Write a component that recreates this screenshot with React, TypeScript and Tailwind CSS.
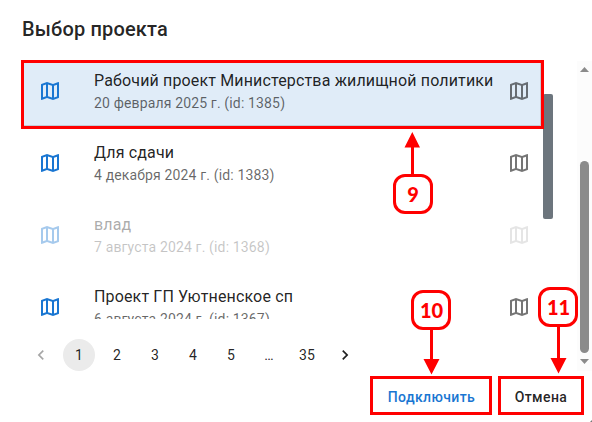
import React from "react";

const MAP_PATH =
  "M20.5 3l-.16.03L15 5.1 9 3 3.36 4.9c-.21.07-.36.25-.36.48V20.5c0 .28.22.5.5.5l.16-.03L9 18.9l6 2.1 5.64-1.9c.21-.07.36-.25.36-.48V3.5c0-.28-.22-.5-.5-.5zM10 5.47l4 1.4v11.66l-4-1.4V5.47zm-5 .99l3-1.01v11.7l-3 1.16V6.46zm14 11.08l-3 1.01V6.86l3-1.16v11.84z";

function MapIcon({ className }: { className: string }) {
  return (
    <svg viewBox="0 0 24 24" className={`size-6 shrink-0 fill-current ${className}`} aria-hidden="true">
      <path d={MAP_PATH} />
    </svg>
  );
}

interface Project {
  name: string;
  info: string;
  selected?: boolean;
  disabled?: boolean;
}

const projects: Project[] = [
  { name: "Рабочий проект Министерства жилищной политики", info: "20 февраля 2025 г. (id: 1385)", selected: true },
  { name: "Для сдачи", info: "4 декабря 2024 г. (id: 1383)" },
  { name: "влад", info: "7 августа 2024 г. (id: 1368)", disabled: true },
  { name: "Проект ГП Уютненское сп", info: "6 августа 2024 г. (id: 1367)" },
];

function ProjectRow({ project }: { project: Project }) {
  const fade = project.disabled ? "opacity-[0.38]" : "";
  return (
    <li className={`flex h-[72px] shrink-0 items-center pl-4 pr-3 ${project.selected ? "bg-[#e0ecf8]" : ""}`}>
      <div className={`w-14 shrink-0 ${fade}`}>
        <MapIcon className="text-[#1976d2]" />
      </div>
      <div className={`min-w-0 grow whitespace-nowrap tracking-[0.15px] ${fade}`}>
        <div className="text-base leading-6 text-black/87">{project.name}</div>
        <div className="text-sm leading-5 text-black/60">{project.info}</div>
      </div>
      <MapIcon className={project.disabled ? "text-black/10" : "text-black/54"} />
    </li>
  );
}

function Chevron({ left, className }: { left?: boolean; className: string }) {
  return (
    <svg viewBox="0 0 24 24" className={`size-5 fill-current ${className}`} aria-hidden="true">
      <path
        d={
          left
            ? "M15.41 7.41L14 6l-6 6 6 6 1.41-1.41L10.83 12z"
            : "M10 6L8.59 7.41 13.17 12l-4.58 4.59L10 18l6-6z"
        }
      />
    </svg>
  );
}

function Pagination() {
  return (
    <nav className="flex h-9 items-center text-sm tracking-[0.15px] text-black/87">
      <span className="flex w-[38px] justify-center">
        <Chevron left className="text-black/35" />
      </span>
      {["1", "2", "3", "4", "5", "…", "35"].map((label) => (
        <span key={label} className="flex w-[38px] justify-center">
          <span
            className={`flex size-8 items-center justify-center rounded-full ${label === "1" ? "bg-[#ebebeb]" : ""}`}
          >
            {label}
          </span>
        </span>
      ))}
      <span className="flex w-[38px] justify-center">
        <Chevron className="text-black/87" />
      </span>
    </nav>
  );
}

function PageScrollbar() {
  return (
    <div className="mt-[61px] flex h-[310px] w-[15px] shrink-0 flex-col items-center bg-[#fcfcfc]">
      <svg viewBox="0 0 15 16" className="h-4 w-[15px] fill-[#8b8b8b]">
        <path d="M3 11 7.5 6 12 11z" />
      </svg>
      <div className="mt-[84px] h-[192px] w-[9px] rounded-full bg-[#8b8b8b]" />
      <svg viewBox="0 0 15 18" className="h-[18px] w-[15px] fill-[#8b8b8b]">
        <path d="M3 6h9l-4.500 5z" />
      </svg>
    </div>
  );
}

function Badge({ label, className }: { label: string; className: string }) {
  return (
    <div
      className={`absolute flex size-10 items-center justify-center rounded-xl border-3 border-[#ff0000] bg-white font-['Lato',sans-serif] text-[20px] leading-none font-black text-[#ff0000] ${className}`}
    >
      {label}
    </div>
  );
}

function Annotations() {
  return (
    <div className="pointer-events-none absolute inset-0">
      <div className="absolute top-[60px] left-[21px] h-[69px] w-[523px] border-3 border-[#ff0000] shadow-[inset_-1px_-1px_0_#c3ccd6]" />
      <div className="absolute top-[376px] left-[370px] h-[39px] w-[122px] border-3 border-[#ff0000]" />
      <div className="absolute top-[376px] left-[498px] h-[39px] w-[86px] border-3 border-[#ff0000]" />
      <svg viewBox="0 0 592 422" className="absolute inset-0 h-[422px] w-[592px] fill-[#ff0000]">
        <path d="M412.300 132l7.700 15.500h-6V176h-3v-28.500h-6.500z" />
        <path d="M430 328h3v31h6.500L431.500 374.500 423.500 359h6.500z" />
        <path d="M557 325h3v33h6.500L558.500 373.500 550.500 358h6.500z" />
        <path d="M592 420v2h-2z" className="fill-[#777777]" />
      </svg>
      <Badge label="9" className="top-[174px] left-[393px]" />
      <Badge label="10" className="top-[290px] left-[411px] pl-px" />
      <Badge label="11" className="top-[287px] left-[538px] pl-px" />
    </div>
  );
}

export default function App() {
  return (
    <div className="relative flex h-[422px] w-[592px] overflow-hidden bg-white font-['Roboto',sans-serif]">
      <main className="flex w-[577px] shrink-0 flex-col">
        <h1 className="h-[61px] pt-[13px] pl-[22px] text-xl leading-8 font-medium tracking-[0.15px] text-black/87">
          Выбор проекта
        </h1>
        <div className="flex h-[258px] pl-[22px]">
          <ul className="-mt-px flex h-[259px] w-[521px] shrink-0 flex-col justify-start overflow-hidden">
            <div className="-mt-[5px]">
              {projects.map((project) => (
                <ProjectRow key={project.name} project={project} />
              ))}
            </div>
          </ul>
          <div className="mt-[33px] h-[125px] w-[10px] rounded-[2px] bg-[#6c757d]" />
        </div>
        <div className="pt-[18px] pl-[22px]">
          <Pagination />
        </div>
        <div className="mt-[6px] flex h-9 gap-2 pl-[380px] text-sm font-medium tracking-[0.4px]">
          <button className="w-[103px] shrink-0 text-[#1976d2]">Подключить</button>
          <button className="ml-[11px] w-[78px] shrink-0 text-black/87">Отмена</button>
        </div>
      </main>
      <PageScrollbar />
      <Annotations />
    </div>
  );
}
